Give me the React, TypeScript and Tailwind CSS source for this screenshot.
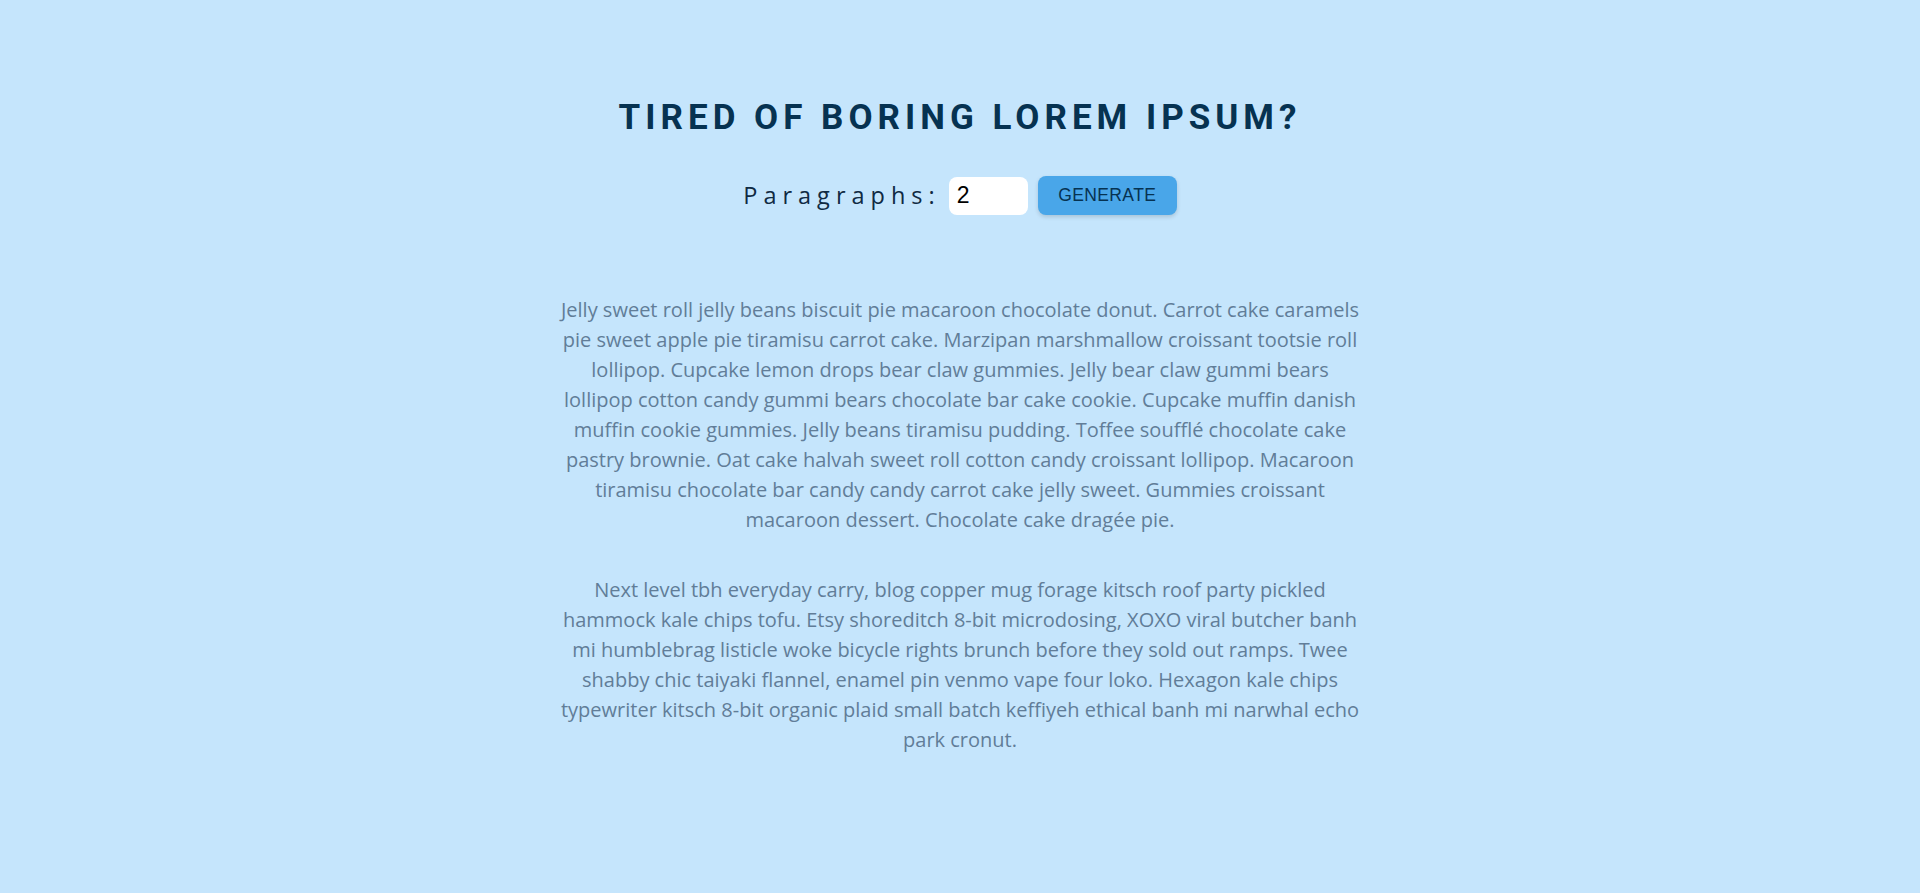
import { useState } from "react";

const paragraphs = [
    "Jelly sweet roll jelly beans biscuit pie macaroon chocolate donut. Carrot cake caramels pie sweet apple pie tiramisu carrot cake. Marzipan marshmallow croissant tootsie roll lollipop. Cupcake lemon drops bear claw gummies. Jelly bear claw gummi bears lollipop cotton candy gummi bears chocolate bar cake cookie. Cupcake muffin danish muffin cookie gummies. Jelly beans tiramisu pudding. Toffee soufflé chocolate cake pastry brownie. Oat cake halvah sweet roll cotton candy croissant lollipop. Macaroon tiramisu chocolate bar candy candy carrot cake jelly sweet. Gummies croissant macaroon dessert. Chocolate cake dragée pie.",
    "Next level tbh everyday carry, blog copper mug forage kitsch roof party pickled hammock kale chips tofu. Etsy shoreditch 8-bit microdosing, XOXO viral butcher banh mi humblebrag listicle woke bicycle rights brunch before they sold out ramps. Twee shabby chic taiyaki flannel, enamel pin venmo vape four loko. Hexagon kale chips typewriter kitsch 8-bit organic plaid small batch keffiyeh ethical banh mi narwhal echo park cronut.",
];

export default function App() {
    const [count, setCount] = useState("2");
    const [text, setText] = useState(paragraphs);

    const handleSubmit = (e: React.FormEvent) => {
        e.preventDefault();
        const n = Math.max(1, parseInt(count) || 1);
        setText(paragraphs.slice(0, n));
    };

    return (
        <div className="min-h-screen bg-[#c5e5fc] pt-[96px] pb-20">
            <section className="mx-auto w-[800px] text-center">

                {/* Title */}
                <h1 className="font-['Roboto',sans-serif] text-[35px] leading-[44px] font-bold tracking-[5px] text-[#063251] uppercase">
                    Tired of boring lorem ipsum?
                </h1>

                {/* Form */}
                <form
                    onSubmit={handleSubmit}
                    className="mt-[36px] flex items-center justify-center"
                >
                    <label
                        htmlFor="amount"
                        className="font-['Open_Sans',sans-serif] text-[23.5px] tracking-[6px] text-[#102a43]"
                    >
                        Paragraphs:
                    </label>
                    <input
                        id="amount"
                        type="number"
                        value={count}
                        onChange={(e) => setCount(e.target.value)}
                        className="ml-[8px] h-[38px] w-[79px] rounded-lg bg-white pl-[8px] font-['Liberation_Sans',sans-serif] text-[23px] text-black outline-none [appearance:textfield] [&::-webkit-inner-spin-button]:appearance-none"
                    />
                    <button
                        type="submit"
                        className="ml-[10px] h-[39px] w-[139px] rounded-lg bg-[#49a6e9] font-['Liberation_Sans',sans-serif] text-[17.5px] tracking-[0.4px] text-[#063251] uppercase shadow-[0_2px_4px_rgba(0,0,0,0.15)]"
                    >
                        Generate
                    </button>
                </form>

                {/* Result */}
                <article className="mt-[80px]">
                    {text.map((p, i) => (
                        <p
                            key={i}
                            className="mb-10 font-['Open_Sans',sans-serif] text-[20px] leading-[30px] text-[#617d98]"
                        >
                            {p}
                        </p>
                    ))}
                </article>

            </section>
        </div>
    );
}
